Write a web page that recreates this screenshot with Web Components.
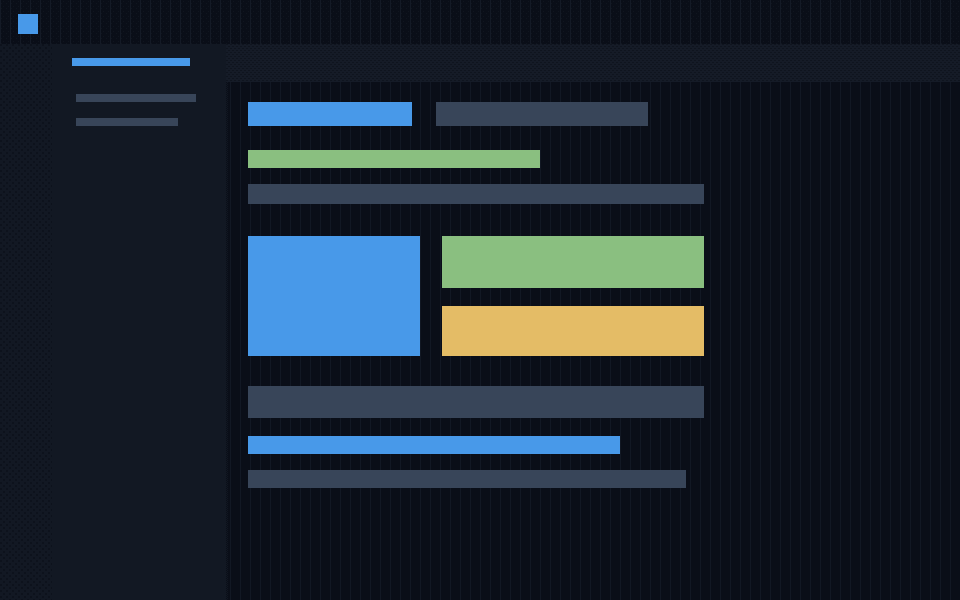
<!doctype html>
<html>
<head>
<meta charset="utf-8">
<title>Layout</title>
<style>
  html, body { margin: 0; height: 100%; background: #0a0e18; }
</style>
</head>
<body>
<app-shell></app-shell>
<script>
// conic tile that paints one small square in the top left corner
const dot = (c, w, h) => `conic-gradient(from 0deg at ${w}px ${h}px, transparent 75%, ${c} 0)`;

// flat placeholder block, size and colour come from attributes
class SkelBlock extends HTMLElement {
  constructor() {
    super();
    this.attachShadow({ mode: "open" });
    const w = this.getAttribute("w") || 0;
    const h = this.getAttribute("h") || 0;
    const c = this.getAttribute("c") || "grey";
    const colours = { blue: "#4899e9", green: "#8abf80", yellow: "#e4bc66", grey: "#384559" };
    this.shadowRoot.innerHTML = `<style>
      :host { display: block; width: ${w}px; height: ${h}px; background: ${colours[c]}; flex: none; }
    </style>`;
  }
}
customElements.define("skel-block", SkelBlock);

class TopBar extends HTMLElement {
  constructor() {
    super();
    this.attachShadow({ mode: "open" });
    this.shadowRoot.innerHTML = `<style>
      :host {
        display: block; height: 44px; padding: 14px 0 0 18px; box-sizing: border-box;
        background-color: #0a0e18;
        background-image:
          repeating-linear-gradient(90deg, #141a26 0 1px, transparent 1px 10px),
          ${dot("#10151f", 1, 1)},
          ${dot("#10151f", 1, 1)};
        background-size: auto, 5px 5px, 5px 5px;
        background-position: 0 0, 3px 1px, 6px 3px;
      }
    </style><slot></slot>`;
  }
}
customElements.define("top-bar", TopBar);

class SideBar extends HTMLElement {
  constructor() {
    super();
    this.attachShadow({ mode: "open" });
    this.shadowRoot.innerHTML = `<style>
      :host {
        display: block; width: 226px; flex: none; box-sizing: border-box;
        background-color: #121823; position: relative;
      }
      .dither {
        position: absolute; left: 0; top: 0; bottom: 0; width: 52px;
        background-image: ${dot("#0d121c", 2, 2)}, ${dot("#0d121c", 2, 2)};
        background-size: 6px 6px;
        background-position: 0 0, 3px 3px;
      }
      .list { position: relative; display: flex; flex-direction: column; padding: 14px 0 0 72px; }
      .items { display: flex; flex-direction: column; gap: 16px; padding: 28px 0 0 4px; }
    </style>
    <div class="dither"></div>
    <div class="list">
      <skel-block w="118" h="8" c="blue"></skel-block>
      <div class="items">
        <skel-block w="120" h="8" c="grey"></skel-block>
        <skel-block w="102" h="8" c="grey"></skel-block>
      </div>
    </div>`;
  }
}
customElements.define("side-bar", SideBar);

class MainPane extends HTMLElement {
  constructor() {
    super();
    this.attachShadow({ mode: "open" });
    this.shadowRoot.innerHTML = `<style>
      :host { display: flex; flex-direction: column; flex: 1; min-width: 0; }
      .tabs {
        height: 38px; flex: none;
        background-color: #151b27;
        background-image: ${dot("#0f141e", 2, 1)}, ${dot("#0f141e", 2, 1)};
        background-size: 4px 4px;
        background-position: 0 0, 2px 2px;
      }
      .body {
        flex: 1; display: flex; flex-direction: column; padding: 20px 0 0 22px;
        background-color: #0a0e18;
        background-image:
          conic-gradient(#111722 25%, transparent 0 50%, #111722 0 75%, transparent 0),
          repeating-linear-gradient(90deg, transparent 0 4px, #121824 4px 5px, transparent 5px 10px);
        background-size: 2px 2px, auto;
        background-repeat: repeat-y, repeat;
      }
      .row { display: flex; gap: 24px; }
      .m24 { margin-top: 24px; }
      .m16 { margin-top: 16px; }
      .m32 { margin-top: 32px; }
      .m30 { margin-top: 30px; }
      .m18 { margin-top: 18px; }
      .grid { display: grid; grid-template-columns: 172px 262px; column-gap: 22px; row-gap: 18px; grid-template-rows: 52px 50px; }
      .grid skel-block:first-child { grid-row: 1 / 3; }
    </style>
    <div class="tabs"></div>
    <div class="body">
      <div class="row">
        <skel-block w="164" h="24" c="blue"></skel-block>
        <skel-block w="212" h="24" c="grey"></skel-block>
      </div>
      <skel-block class="m24" w="292" h="18" c="green"></skel-block>
      <skel-block class="m16" w="456" h="20" c="grey"></skel-block>
      <div class="grid m32">
        <skel-block w="172" h="120" c="blue"></skel-block>
        <skel-block w="262" h="52" c="green"></skel-block>
        <skel-block w="262" h="50" c="yellow"></skel-block>
      </div>
      <skel-block class="m30" w="456" h="32" c="grey"></skel-block>
      <skel-block class="m18" w="372" h="18" c="blue"></skel-block>
      <skel-block class="m16" w="438" h="18" c="grey"></skel-block>
    </div>`;
  }
}
customElements.define("main-pane", MainPane);

class AppShell extends HTMLElement {
  constructor() {
    super();
    this.attachShadow({ mode: "open" });
    this.shadowRoot.innerHTML = `<style>
      :host { display: flex; flex-direction: column; width: 960px; height: 600px; overflow: hidden; }
      .under { display: flex; flex: 1; min-height: 0; }
    </style>
    <top-bar><skel-block w="20" h="20" c="blue"></skel-block></top-bar>
    <div class="under">
      <side-bar></side-bar>
      <main-pane></main-pane>
    </div>`;
  }
}
customElements.define("app-shell", AppShell);
</script>
</body>
</html>
